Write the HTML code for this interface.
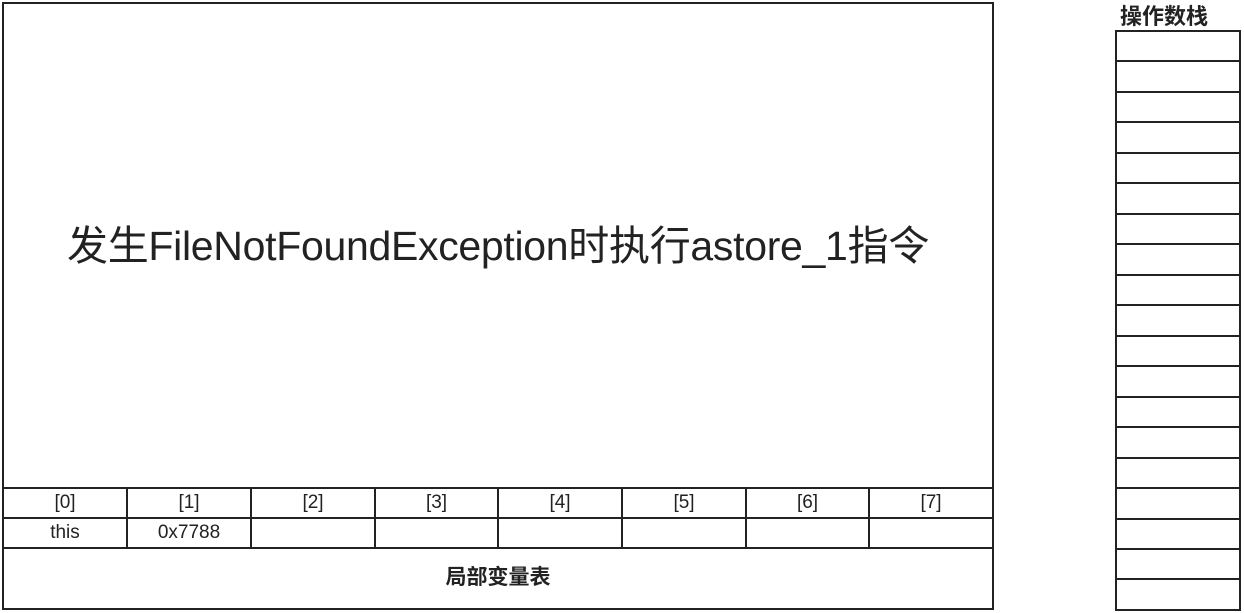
<!DOCTYPE html>
<html><head><meta charset="utf-8"><style>
body{margin:0;width:1244px;height:613px;background:#fff;position:relative;overflow:hidden;font-family:"Liberation Sans","Noto Sans CJK SC",sans-serif;color:#222}
.h{position:absolute;height:2px;background:#222}
.v{position:absolute;width:2px;background:#222}
.t{position:absolute;text-align:center;font-size:19px;line-height:30px}
</style></head><body>
<div class="h" style="left:2px;top:2px;width:992px"></div>
<div class="v" style="left:2px;top:2px;height:608px"></div>
<div class="v" style="left:992px;top:2px;height:608px"></div>
<div class="h" style="left:2px;top:608px;width:992px"></div>
<div class="h" style="left:2px;top:487px;width:992px"></div>
<div class="h" style="left:2px;top:517px;width:992px"></div>
<div class="h" style="left:2px;top:547px;width:992px"></div>
<div style="position:absolute;left:0;top:218px;width:996px;text-align:center;font-size:41px;line-height:56px;letter-spacing:-0.3px">发生FileNotFoundException时执行astore_1指令</div>
<div id="cols"></div>
<div class="t" style="left:2px;top:563px;width:992px;font-weight:bold;font-size:21px">局部变量表</div>
<div style="position:absolute;left:1120px;top:3px;font-weight:bold;font-size:22px;line-height:28px">操作数栈</div>
<div class="v" style="left:1115px;top:30px;height:580px"></div>
<div class="v" style="left:1239px;top:30px;height:580px"></div>
<div id="stack"></div>
<script>
var xs=[3,127,251,375,498,622,746,869,993];
var c=document.getElementById('cols'),h='';
for(var i=0;i<8;i++){
 if(i>0)h+='<div class="v" style="left:'+(xs[i]-1)+'px;top:487px;height:62px"></div>';
 h+='<div class="t" style="left:'+xs[i]+'px;top:488px;width:'+(xs[i+1]-xs[i])+'px">['+i+']</div>';
}
h+='<div class="t" style="left:3px;top:518px;width:124px">this</div>';
h+='<div class="t" style="left:127px;top:518px;width:124px">0x7788</div>';
c.innerHTML=h;
var s='';
for(var j=0;j<20;j++){var y=Math.round(30+j*30.47);s+='<div class="h" style="left:1115px;top:'+y+'px;width:126px"></div>';}
document.getElementById('stack').innerHTML=s;
</script>
</body></html>
